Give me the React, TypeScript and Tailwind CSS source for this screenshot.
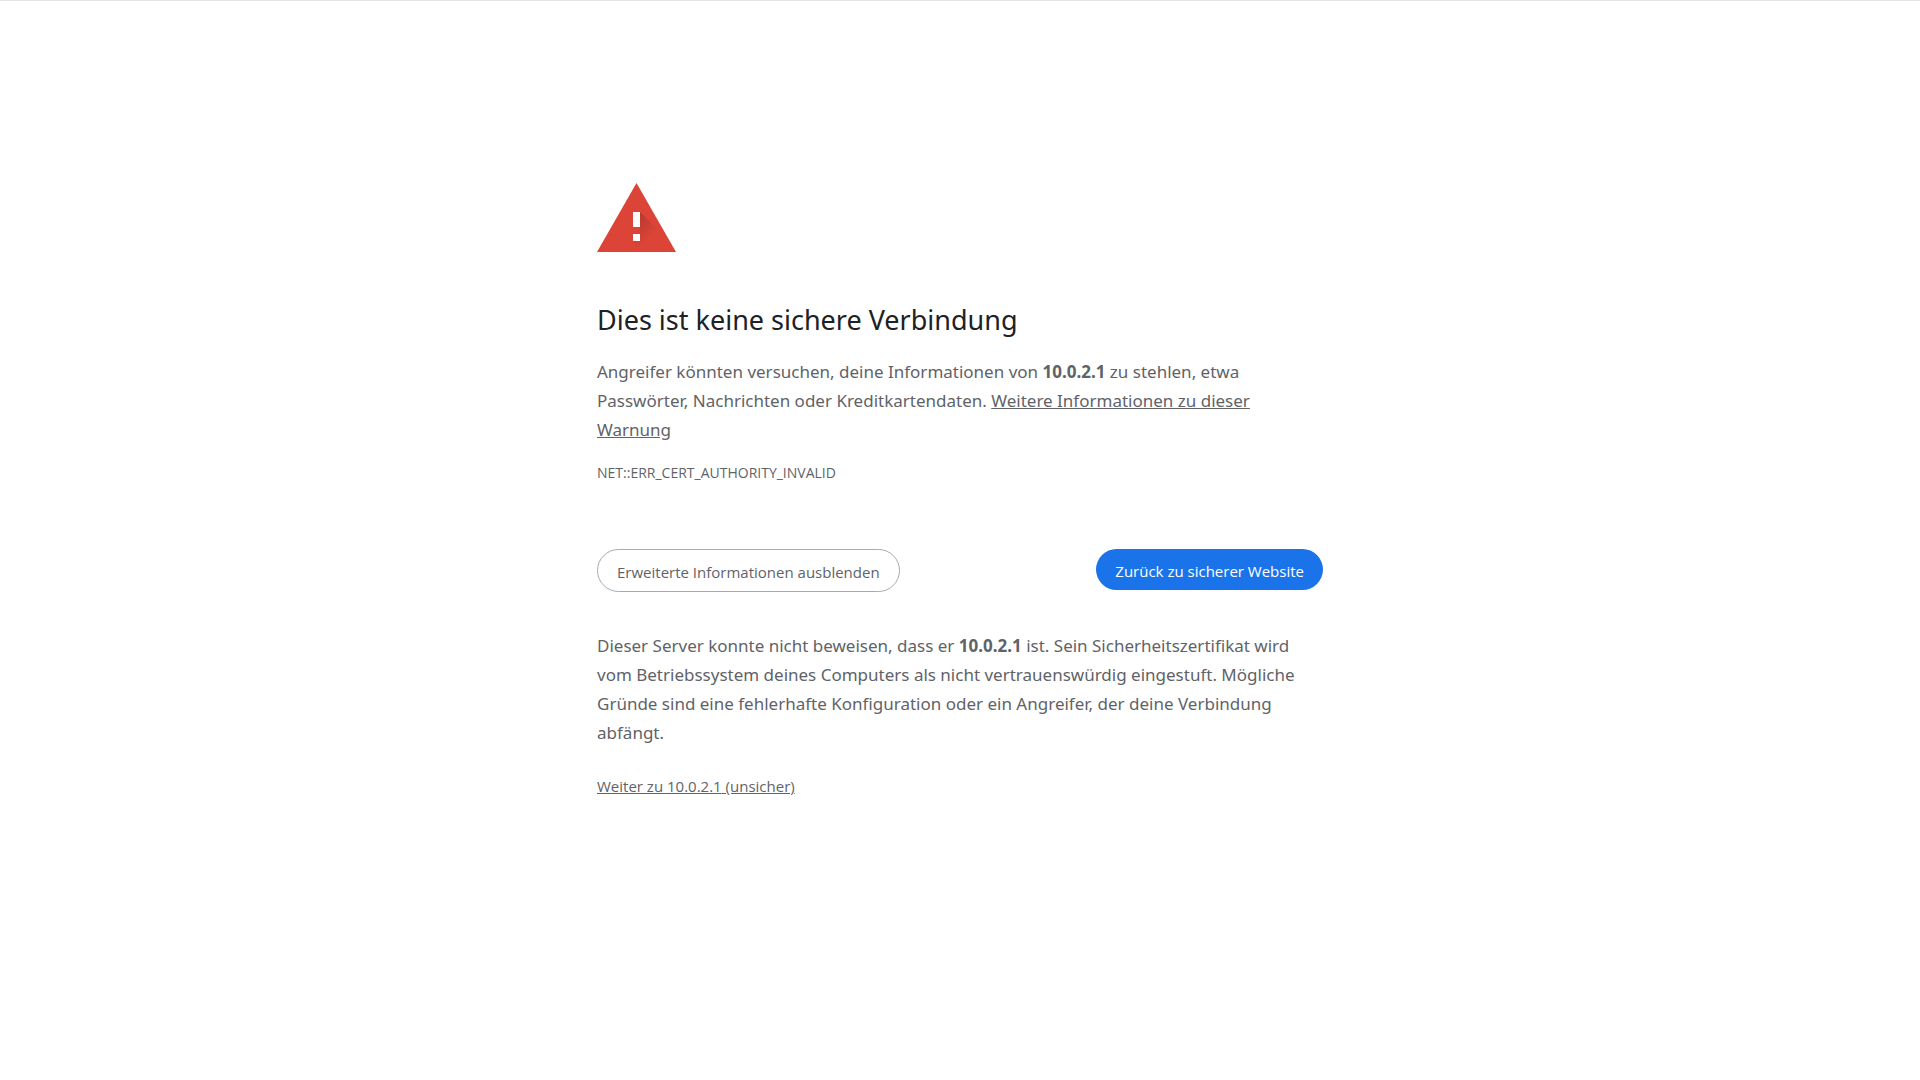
import React, { useState } from 'react';

const HOST = '10.0.2.1';

const WarningIcon: React.FC = () => (
  <svg
    width="79"
    height="69"
    viewBox="0 0 79 69"
    fill="none"
    aria-hidden="true"
  >
    <defs>
      <linearGradient id="mark-shadow" x1="40" y1="36" x2="56" y2="52" gradientUnits="userSpaceOnUse">
        <stop stopColor="#000" stopOpacity="0.15" />
        <stop offset="1" stopColor="#000" stopOpacity="0" />
      </linearGradient>
    </defs>
    <path d="M39.5 0 L79 69 H0 Z" fill="#db4437" />
    {/* Soft shadow behind the exclamation mark */}
    <path d="M43 29 L60 46 V69 H47 L36 58 V51 H43 Z" fill="url(#mark-shadow)" />
    <path d="M36 29h7v15h-7z M36 51h7v7h-7z" fill="#fff" />
  </svg>
);

const App: React.FC = () => {
  const [showDetails, setShowDetails] = useState(true);

  return (
    <div className="min-h-screen border-t border-[#e4e4e4] bg-white px-6 font-['Noto_Sans',sans-serif] text-[#5f6368]">
      <main className="mx-auto w-full max-w-[726px] pt-[182px]">
        <WarningIcon />

        <h1 className="mt-12 text-[27px] leading-10 text-[#202124]">Dies ist keine sichere Verbindung</h1>

        <p className="mt-[17px] text-[17px] leading-[29px]">
          Angreifer könnten versuchen, deine Informationen von <strong>{HOST}</strong> zu stehlen, etwa
          Passwörter, Nachrichten oder Kreditkartendaten.{' '}
          <a href="#info" className="underline">Weitere Informationen zu dieser Warnung</a>
        </p>

        <p className="mt-[19px] font-['Open_Sans',sans-serif] text-sm leading-5">NET::ERR_CERT_AUTHORITY_INVALID</p>

        {/* Actions */}
        <div className="mt-[66px] flex flex-wrap items-start justify-between gap-3 font-['Open_Sans',sans-serif]">
          <button
            onClick={() => setShowDetails(!showDetails)}
            className="rounded-full border border-[#a8aaad] px-[19px] pt-3 pb-2 text-[15px] leading-[21px]"
          >
            {showDetails ? 'Erweiterte Informationen ausblenden' : 'Erweiterte Informationen'}
          </button>
          <button className="rounded-full bg-[#1a73e8] px-[19px] pt-3 pb-2 text-[15px] leading-[21px] text-white">
            Zurück zu sicherer Website
          </button>
        </div>

        {showDetails && (
          <div className="mt-[39px]">
            <p className="text-[17px] leading-[29px]">
              Dieser Server konnte nicht beweisen, dass er <strong>{HOST}</strong> ist. Sein
              Sicherheitszertifikat wird vom Betriebssystem deines Computers als nicht vertrauenswürdig
              eingestuft. Mögliche Gründe sind eine fehlerhafte Konfiguration oder ein Angreifer, der deine
              Verbindung abfängt.
            </p>
            <a href="#proceed" className="mt-[29px] inline-block font-['Open_Sans',sans-serif] text-[15px] leading-[21px] underline">
              Weiter zu {HOST} (unsicher)
            </a>
          </div>
        )}
      </main>
    </div>
  );
};

export default App;
